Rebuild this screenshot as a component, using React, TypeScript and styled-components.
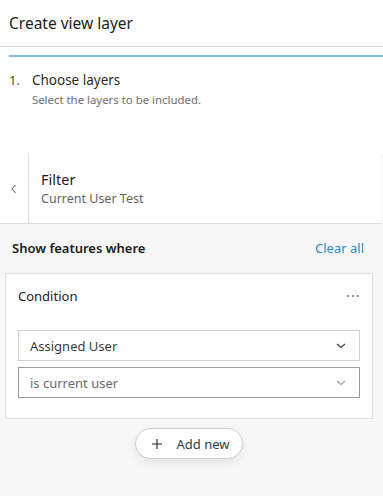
import React from 'react'
import styled, { createGlobalStyle } from 'styled-components'

const GlobalStyle = createGlobalStyle`
  html, body {
    margin: 0;
    padding: 0;
    background: #ffffff;
  }
  body {
    font-family: "Avenir Next", "Noto Sans", Lato, sans-serif;
    color: #151515;
  }
  * { box-sizing: border-box; }
`

const Page = styled.div`
  width: 383px;
  height: 496px;
  display: flex;
  flex-direction: column;
  overflow: hidden;
  background: #ffffff;
`

const Header = styled.header`
  height: 47px;
  padding: 0 9px;
  display: flex;
  align-items: center;
  border-bottom: 1px solid #dcdcdc;
  font-size: 15.5px;
  color: #1c1c1c;
`

const Progress = styled.div`
  margin: 8px 0 0 9px;
  height: 2px;
  background: #7ebde2;
`

const Step = styled.div`
  display: flex;
  gap: 12px;
  padding: 14px 9px 0;
  height: 97px;
`

const StepNumber = styled.span`
  font-size: 13px;
  color: #4a4a4a;
  line-height: 18px;
`

const StepText = styled.div`
  display: flex;
  flex-direction: column;
  gap: 3px;
`

const StepTitle = styled.span`
  font-size: 13.5px;
  line-height: 18px;
  color: #2b2b2b;
`

const StepHint = styled.span`
  font-size: 11.4px;
  color: #6e6e6e;
`

const Body = styled.div`
  flex: 1;
  display: flex;
  flex-direction: column;
  background: #f7f7f7;
`

const FilterBar = styled.div`
  display: flex;
  height: 70px;
  background: #ffffff;
  margin-right: 2px;
  border-bottom: 1px solid #dcdcdc;
`

const BackButton = styled.div`
  width: 29px;
  display: flex;
  align-items: center;
  justify-content: center;
  border-right: 1px solid #e0e0e0;
  color: #6a6a6a;
`

const FilterText = styled.div`
  display: flex;
  flex-direction: column;
  justify-content: center;
  padding: 0 0 2px 12px;
  gap: 1px;
`

const FilterTitle = styled.span`
  font-size: 14.5px;
  color: #1c1c1c;
`

const FilterSub = styled.span`
  font-size: 12.5px;
  color: #646464;
`

const SectionHead = styled.div`
  display: flex;
  justify-content: space-between;
  align-items: flex-start;
  padding: 15px 19px 0 12px;
  height: 49px;
  line-height: 18px;
`

const SectionTitle = styled.span`
  font-size: 13px;
  font-weight: 600;
  color: #1c1c1c;
`

const LinkButton = styled.span`
  font-size: 13px;
  color: #2b8bc6;
`

const Card = styled.div`
  margin: 0 10px 0 5px;
  background: #ffffff;
  border: 1px solid #dedede;
  padding: 12px 12px 20px;
`

const CardHead = styled.div`
  display: flex;
  justify-content: space-between;
  align-items: center;
  height: 20px;
  margin-bottom: 24px;
`

const CardTitle = styled.span`
  font-size: 13px;
  color: #1c1c1c;
`

const Select = styled.div<{ $active?: boolean }>`
  height: 31px;
  display: flex;
  align-items: center;
  justify-content: space-between;
  padding: 0 12px 0 11px;
  border: 1px solid ${({ $active }) => ($active ? '#9a9a9a' : '#d0d0d0')};
  font-size: 13px;
  color: ${({ $active }) => ($active ? '#6a6a6a' : '#3a3a3a')};
  & + & {
    margin-top: 6px;
  }
`

const AddRow = styled.div`
  display: flex;
  justify-content: center;
  padding-top: 9px;
  padding-right: 5px;
`

const AddButton = styled.div`
  display: flex;
  align-items: center;
  gap: 13px;
  height: 31px;
  padding: 0 12px 0 15px;
  border: 1px solid #cfcfcf;
  border-radius: 16px;
  background: #ffffff;
  box-shadow: 0 4px 10px rgba(0, 0, 0, 0.08);
  font-size: 13px;
  color: #3a3a3a;
`

function Chevron({ color = '#3a3a3a', dir = 'down' }: { color?: string; dir?: 'down' | 'left' }) {
  const d = dir === 'down' ? 'M2 4l4 3.5L10 4' : 'M7.5 2L4 6l3.5 4'
  return (
    <svg width="12" height="12" viewBox="0 0 12 12" fill="none">
      <path d={d} stroke={color} strokeWidth="1.1" />
    </svg>
  )
}

export default function App() {
  return (
    <>
      <GlobalStyle />
      <Page>
        <Header>Create view layer</Header>
        <Progress />
        <Step>
          <StepNumber>1.</StepNumber>
          <StepText>
            <StepTitle>Choose layers</StepTitle>
            <StepHint>Select the layers to be included.</StepHint>
          </StepText>
        </Step>
        <Body>
          <FilterBar>
            <BackButton>
              <Chevron dir="left" color="#6a6a6a" />
            </BackButton>
            <FilterText>
              <FilterTitle>Filter</FilterTitle>
              <FilterSub>Current User Test</FilterSub>
            </FilterText>
          </FilterBar>
          <SectionHead>
            <SectionTitle>Show features where</SectionTitle>
            <LinkButton>Clear all</LinkButton>
          </SectionHead>
          <Card>
            <CardHead>
              <CardTitle>Condition</CardTitle>
              <svg width="14" height="4" viewBox="0 0 14 4">
                <circle cx="2" cy="2" r="1.1" fill="#7a7a7a" />
                <circle cx="7" cy="2" r="1.1" fill="#7a7a7a" />
                <circle cx="12" cy="2" r="1.1" fill="#7a7a7a" />
              </svg>
            </CardHead>
            <Select>
              Assigned User
              <Chevron color="#3a3a3a" />
            </Select>
            <Select $active>
              is current user
              <Chevron color="#9a9a9a" />
            </Select>
          </Card>
          <AddRow>
            <AddButton>
              <svg width="12" height="12" viewBox="0 0 12 12">
                <path d="M6 1v10M1 6h10" stroke="#222" strokeWidth="1.1" />
              </svg>
              Add new
            </AddButton>
          </AddRow>
        </Body>
      </Page>
    </>
  )
}
